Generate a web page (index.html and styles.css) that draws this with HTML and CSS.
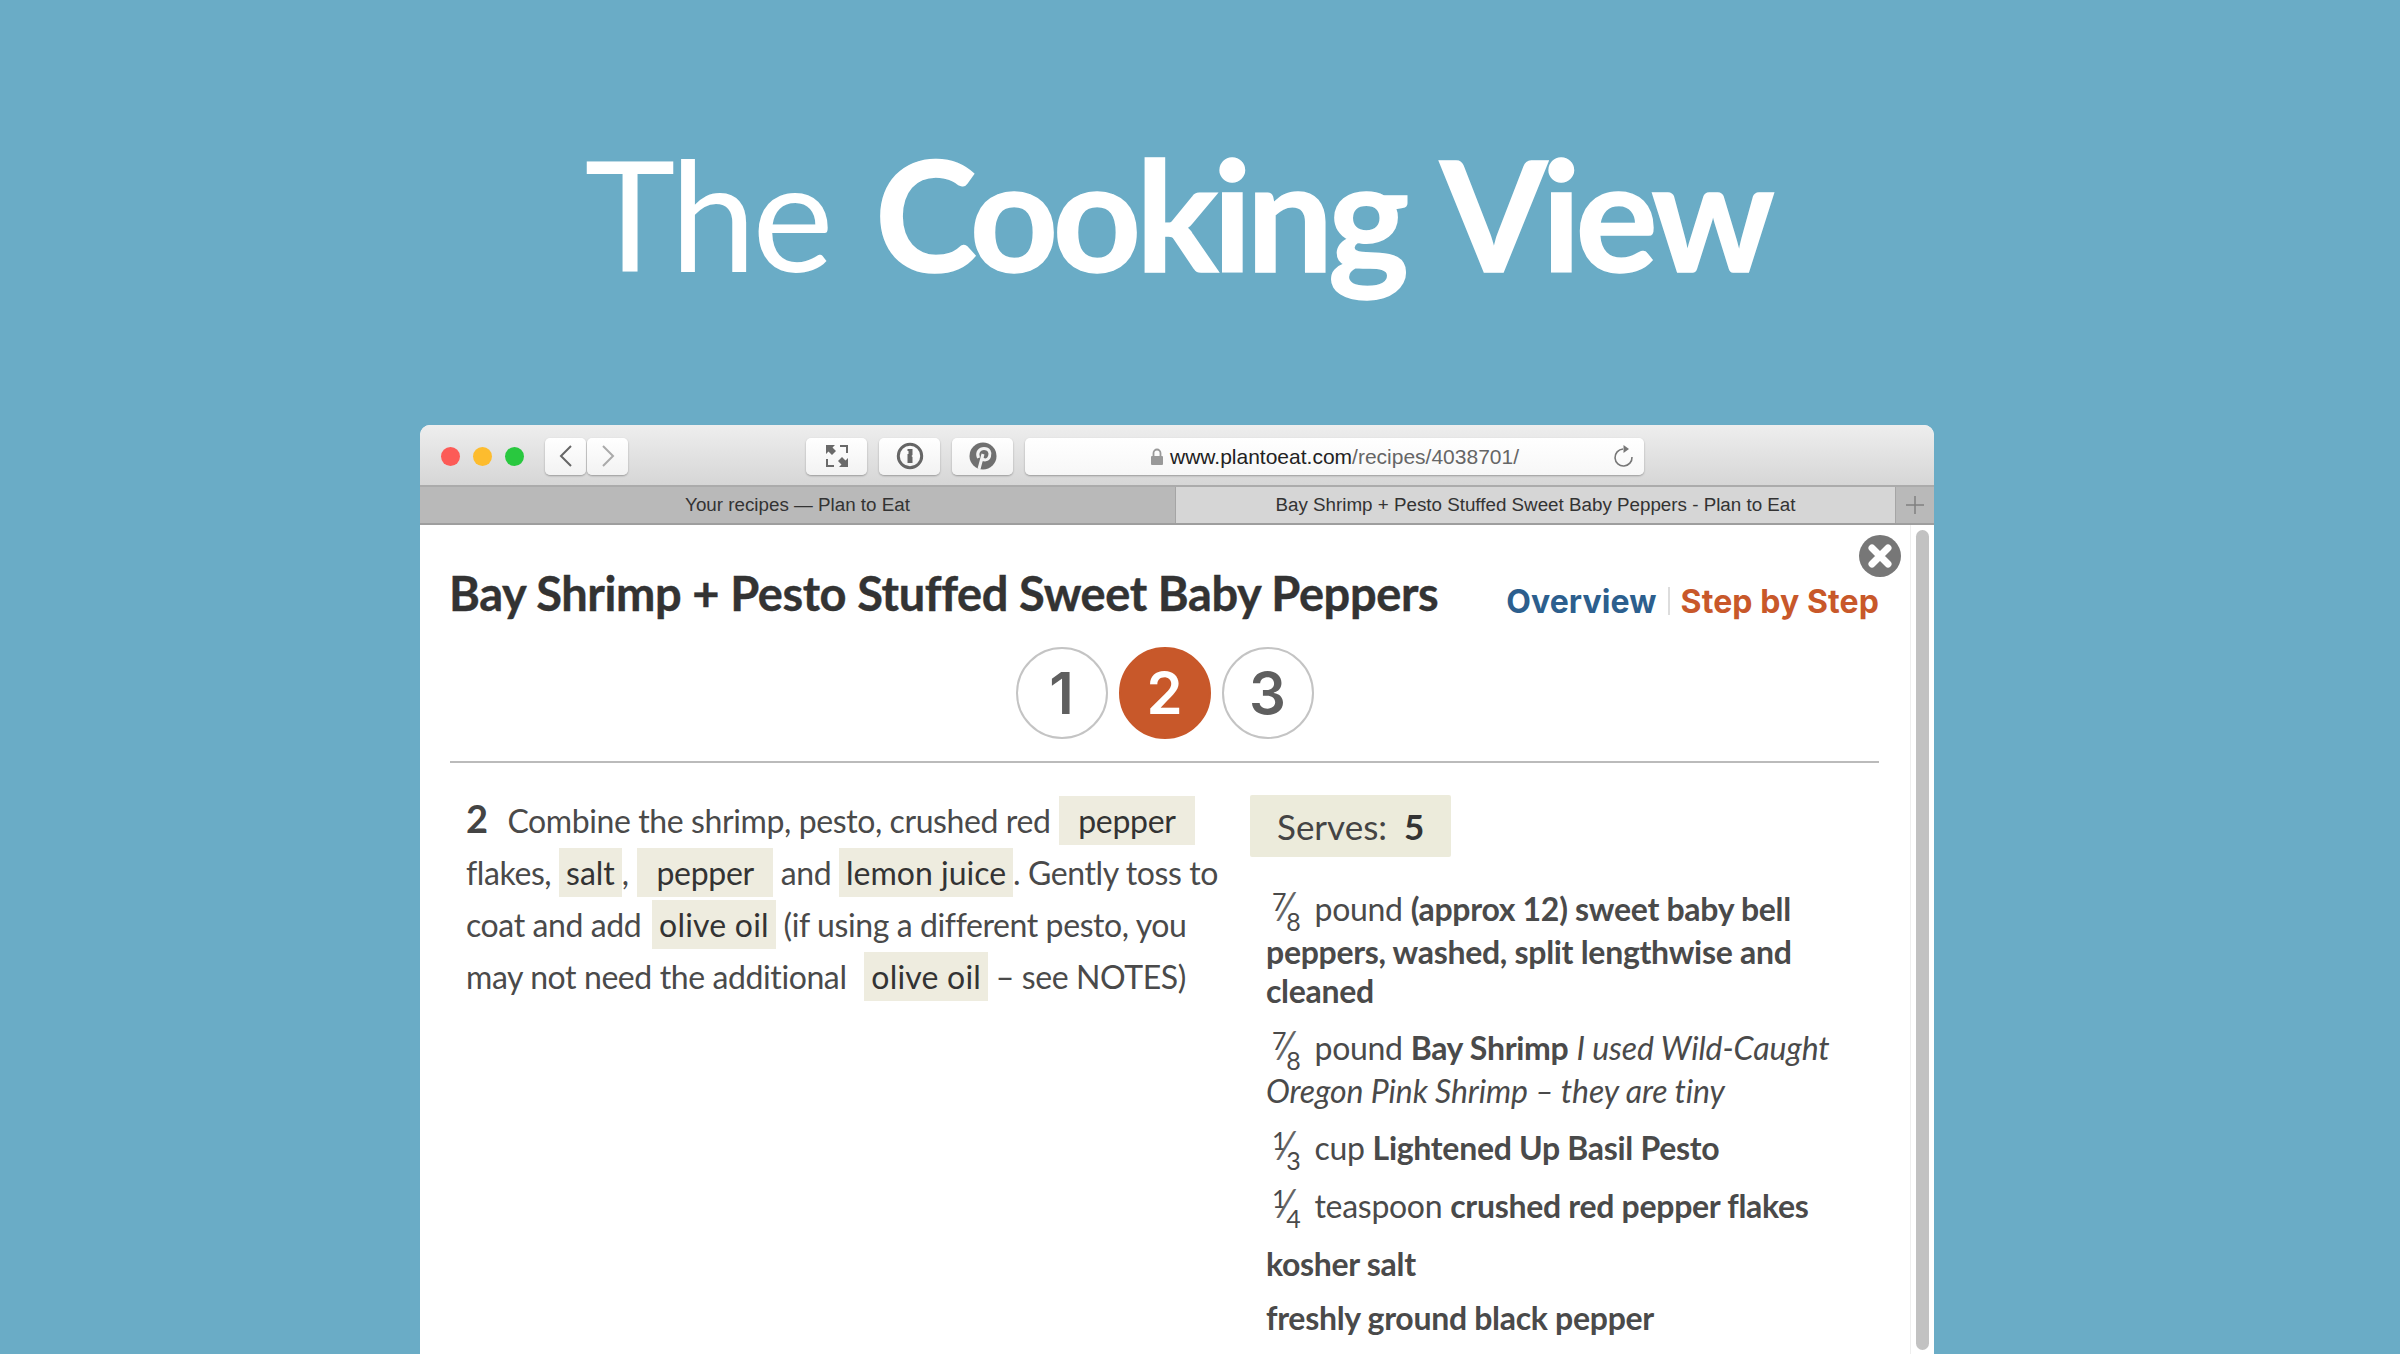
FILE: index.html
```html
<!DOCTYPE html>
<html lang="en">
<head>
    <meta charset="UTF-8">
    <meta name="viewport" content="width=device-width, initial-scale=1.0">
    <title>The Cooking View</title>
    <link rel="stylesheet" href="styles.css">
</head>
<body>
    <div class="stage">
        <h1 class="headline">The <strong>Cooking View</strong></h1>

        <div class="browser">
            <div class="toolbar">
                <div class="lights">
                    <span class="light red"></span>
                    <span class="light amber"></span>
                    <span class="light green"></span>
                </div>
                <div class="nav-buttons">
                    <span class="tool-btn nav-btn">
                        <svg width="14" height="24" viewBox="0 0 14 24"><path d="M12 2 L2 12 L12 22" fill="none" stroke="#666" stroke-width="2"/></svg>
                    </span>
                    <span class="tool-btn nav-btn">
                        <svg width="14" height="24" viewBox="0 0 14 24"><path d="M2 2 L12 12 L2 22" fill="none" stroke="#aaa" stroke-width="2"/></svg>
                    </span>
                </div>
                <span class="tool-btn ext-btn">
                    <svg width="24" height="24" viewBox="0 0 24 24"><path d="M1 1h9L7.500 3.500 11 7l-4 4-3.500-3.500L1 10z M23 23h-9l2.500-2.500L13 17l4-4 3.500 3.500L23 14z" fill="#6a6a6a"/><path d="M15 2h7v7 M2 15v7h7" fill="none" stroke="#6a6a6a" stroke-width="2"/></svg>
                </span>
                <span class="tool-btn ext-btn">
                    <svg width="28" height="28" viewBox="0 0 28 28"><circle cx="14" cy="14" r="11.700" fill="none" stroke="#666" stroke-width="3"/><path d="M11.500 7h5v6l-1 1 1 1v6h-5v-9h1v-3h-1z" fill="#666"/></svg>
                </span>
                <span class="tool-btn ext-btn">
                    <svg width="28" height="28" viewBox="0 0 28 28"><circle cx="14" cy="14" r="13.500" fill="#707070"/><path d="M10 27 L14 12 M9.500 16 C7 10 11 6.500 15 6.500 C20 6.500 22 10.500 20.500 14.500 C19 18.500 14.500 19 13 16" fill="none" stroke="#f2f2f2" stroke-width="3"/></svg>
                </span>
                <div class="url-bar">
                    <span class="url">
                        <svg width="14" height="18" viewBox="0 0 14 18"><path d="M3.500 8V5a3.500 3.500 0 0 1 7 0v3" fill="none" stroke="#999" stroke-width="1.800"/><rect x="1" y="8" width="12" height="9" rx="1" fill="#999"/></svg>
                        <span class="url-text">www.plantoeat.com<span class="url-path">/recipes/4038701/</span></span>
                    </span>
                    <svg class="reload" width="22" height="24" viewBox="0 0 22 24"><path d="M10 5 A8.500 8.500 0 1 0 19 13" fill="none" stroke="#777" stroke-width="1.600"/><path d="M10.500 1 L16 5 L10.500 9z" fill="#777"/></svg>
                </div>
            </div>

            <div class="tabs">
                <div class="tab">Your recipes — Plan to Eat</div>
                <div class="tab active">Bay Shrimp + Pesto Stuffed Sweet Baby Peppers - Plan to Eat</div>
                <div class="tab-add">
                    <svg width="18" height="18" viewBox="0 0 18 18"><path d="M9 0v18M0 9h18" stroke="#808080" stroke-width="1.500"/></svg>
                </div>
            </div>

            <div class="viewport">
                <main class="recipe">
                    <header class="recipe-head">
                        <h2 class="recipe-title">Bay Shrimp + Pesto Stuffed Sweet Baby Peppers</h2>
                        <nav class="view-switch">
                            <a class="overview">Overview</a>
                            <span class="sep"></span>
                            <a class="stepwise">Step by Step</a>
                        </nav>
                    </header>

                    <div class="steps">
                        <span class="step">1</span>
                        <span class="step current">2</span>
                        <span class="step">3</span>
                    </div>

                    <div class="columns">
                        <p class="instruction"><b class="step-no">2</b> Combine the shrimp, pesto, crushed red <mark class="wide">pepper</mark> flakes, <mark>salt</mark>, <mark class="wide">pepper</mark> and <mark>lemon juice</mark>. Gently toss to coat and add <mark class="oil">olive oil</mark> (if using a different pesto, you may not need the additional <mark class="oil last">olive oil</mark> – see NOTES)</p>

                        <div class="ingredients">
                            <div class="serves">Serves: <b>5</b></div>
                            <p class="item"><span class="frac"><sup>7</sup><span class="slash">⁄</span><sub>8</sub></span> pound <b>(approx 12) sweet baby bell peppers, washed, split lengthwise and cleaned</b></p>
                            <p class="item"><span class="frac"><sup>7</sup><span class="slash">⁄</span><sub>8</sub></span> pound <b>Bay Shrimp</b> <i>I used Wild-Caught Oregon Pink Shrimp – they are tiny</i></p>
                            <p class="item tight"><span class="frac"><sup>1</sup><span class="slash">⁄</span><sub>3</sub></span> cup <b>Lightened Up Basil Pesto</b></p>
                            <p class="item tight"><span class="frac"><sup>1</sup><span class="slash">⁄</span><sub>4</sub></span> teaspoon <b>crushed red pepper flakes</b></p>
                            <p class="item tight"><b>kosher salt</b></p>
                            <p class="item"><b>freshly ground black pepper</b></p>
                        </div>
                    </div>
                </main>
                <div class="scroll-gutter"><span class="scroll-thumb"></span></div>

                <span class="close-btn">
                    <svg width="42" height="42" viewBox="0 0 42 42"><circle cx="21" cy="21" r="21" fill="#777"/><path d="M13 13 L29 29 M29 13 L13 29" stroke="#fff" stroke-width="7" stroke-linecap="round"/></svg>
                </span>
            </div>
        </div>
    </div>
</body>
</html>
```

FILE: styles.css
```css
html, body {
    height: 100%;
}
body {
    margin: 0;
    background-color: #6aacc6;
    font-family: Lato, "Open Sans", sans-serif;
    overflow: hidden;
}
.stage {
    width: 1514px;
    margin-left: 420px;
}
.headline {
    margin: 0;
    height: 425px;
    padding-top: 118px;
    box-sizing: border-box;
    text-align: center;
    color: #fff;
    font-size: 154px;
    line-height: 190px;
    font-weight: 400;
    letter-spacing: -4px;
    word-spacing: 10px;
    white-space: nowrap;
}
.headline strong {
    font-weight: 700;
    letter-spacing: -5.400px;
    -webkit-text-stroke: 1.5px #fff;
}

/* browser chrome */
.browser {
    background-color: #fff;
    border-radius: 10px 10px 0 0;
    overflow: hidden;
}
.toolbar {
    height: 62px;
    padding-top: 2px;
    display: flex;
    align-items: center;
    background: linear-gradient(#eeeeee, #d6d6d6);
    border-bottom: 2px solid #ababab;
    box-sizing: border-box;
}
.lights {
    display: flex;
    gap: 13px;
    margin-left: 21px;
}
.light {
    width: 19px;
    height: 19px;
    border-radius: 50%;
}
.red { background-color: #fc5b57; }
.amber { background-color: #fdbc2e; }
.green { background-color: #29c83f; }
.nav-buttons {
    display: flex;
    gap: 1px;
    margin-left: 21px;
    margin-right: 178px;
}
.tool-btn {
    display: flex;
    align-items: center;
    justify-content: center;
    height: 37px;
    background: linear-gradient(#ffffff, #f2f2f2);
    border-radius: 5px;
    box-shadow: 0 1px 2px rgba(0, 0, 0, 0.3);
}
.nav-btn {
    width: 41px;
}
.ext-btn {
    width: 61px;
    margin-right: 12px;
}
.url-bar {
    position: relative;
    width: 619px;
    height: 37px;
    display: flex;
    align-items: center;
    justify-content: center;
    background: linear-gradient(#ffffff, #f7f7f7);
    border-radius: 5px;
    box-shadow: 0 1px 2px rgba(0, 0, 0, 0.3);
}
.url {
    display: flex;
    align-items: center;
    gap: 6px;
    padding-top: 2px;
}
.url-text {
    font-family: "Liberation Sans", sans-serif;
    font-size: 21px;
    color: #222;
}
.url-path {
    color: #666;
}
.reload {
    position: absolute;
    right: 9px;
    top: 6px;
}
.tabs {
    height: 38px;
    display: flex;
    background-color: #b9b9b9;
    border-bottom: 2px solid #9e9e9e;
    box-sizing: border-box;
    font-family: "Liberation Sans", sans-serif;
    font-size: 18.800px;
    color: #333;
}
.tab {
    width: 755px;
    display: flex;
    align-items: center;
    justify-content: center;
}
.tab.active {
    width: 721px;
    background-color: #d6d6d6;
    border-left: 1px solid #a5a5a5;
    border-right: 1px solid #a5a5a5;
    box-sizing: border-box;
}
.tab-add {
    flex: 1;
    display: flex;
    align-items: center;
    justify-content: center;
}

/* page in the browser */
.viewport {
    position: relative;
    display: flex;
    height: 830px;
}
.recipe {
    width: 1429px;
    margin-left: 30px;
    color: #4a4a4a;
}
.recipe-head {
    display: flex;
    justify-content: space-between;
    align-items: center;
    padding-top: 37px;
    height: 62px;
}
.recipe-title {
    margin: 0 0 0 -1px;
    font-size: 47px;
    line-height: 62px;
    font-weight: 700;
    letter-spacing: -0.4px;
    color: #333;
    white-space: nowrap;
    -webkit-text-stroke: 0.4px #333;
}
.view-switch {
    display: flex;
    align-items: center;
    gap: 11px;
    margin-top: 16px;
    font-family: Inter, sans-serif;
    font-size: 32px;
    font-weight: 700;
    letter-spacing: 0.1px;
}
.overview { color: #2c5f8e; }
.stepwise { color: #c8582a; }
.sep {
    width: 2px;
    height: 28px;
    background-color: #ddd;
}
.steps {
    display: flex;
    justify-content: center;
    gap: 11px;
    margin-top: 23px;
    padding-bottom: 22px;
    border-bottom: 2px solid #bbb;
}
.step {
    width: 92px;
    height: 92px;
    box-sizing: border-box;
    border: 2px solid #c4c4c4;
    border-radius: 50%;
    display: flex;
    align-items: center;
    justify-content: center;
    font-family: Inter, sans-serif;
    font-size: 58px;
    font-weight: 600;
    color: #5f5f5f;
}
.step.current {
    background-color: #c8582a;
    border-color: #c8582a;
    color: #fff;
}
.columns {
    display: flex;
    padding-top: 29px;
}
.instruction {
    width: 758px;
    margin: 0 0 0 16px;
    font-size: 32px;
    line-height: 52px;
    letter-spacing: -0.4px;
}
.step-no {
    font-size: 38px;
    margin-right: 12px;
    color: #444;
}
mark {
    background-color: #eeecdf;
    color: #333;
    padding: 5px 7px;
    letter-spacing: 0;
}
mark.wide {
    margin-left: 1px;
    padding: 5px 19px;
    letter-spacing: -0.3px;
}
mark.oil {
    margin-left: 3px;
    letter-spacing: 0.2px;
}
mark.oil.last {
    margin-left: 10px;
}
.ingredients {
    width: 618px;
    margin-left: 26px;
    margin-top: 3px;
}
.serves {
    display: inline-block;
    height: 62px;
    line-height: 62px;
    padding: 0 27px;
    background-color: #ecebdb;
    border-radius: 2px;
    font-size: 35px;
    color: #444;
    margin-bottom: 32px;
}
.serves b {
    margin-left: 8px;
    color: #333;
}
.item {
    margin: 0 0 18px 16px;
    font-size: 32px;
    line-height: 39px;
    letter-spacing: -0.3px;
}
.item.tight {
    margin-bottom: 15px;
}
.item i {
    letter-spacing: -0.1px;
}
.frac {
    margin: 0 6px 0 6px;
    letter-spacing: 0;
}
.frac sup,
.frac sub {
    font-size: 25px;
}
.frac sup {
    line-height: 0;
    vertical-align: 10px;
}
.frac sub {
    line-height: 21px;
    vertical-align: -10px;
}
.slash {
    font-size: 40px;
    line-height: 0;
    margin: 0 -3px;
    color: #666;
}
.scroll-gutter {
    width: 24px;
    margin-left: 31px;
    border-left: 1px solid #eee;
    box-sizing: border-box;
    padding: 5px 5px 0 5px;
}
.scroll-thumb {
    display: block;
    width: 13px;
    height: 820px;
    background-color: #c2c2c2;
    border-radius: 7px;
}
.close-btn {
    position: absolute;
    top: 10px;
    right: 33px;
    height: 42px;
}
```
